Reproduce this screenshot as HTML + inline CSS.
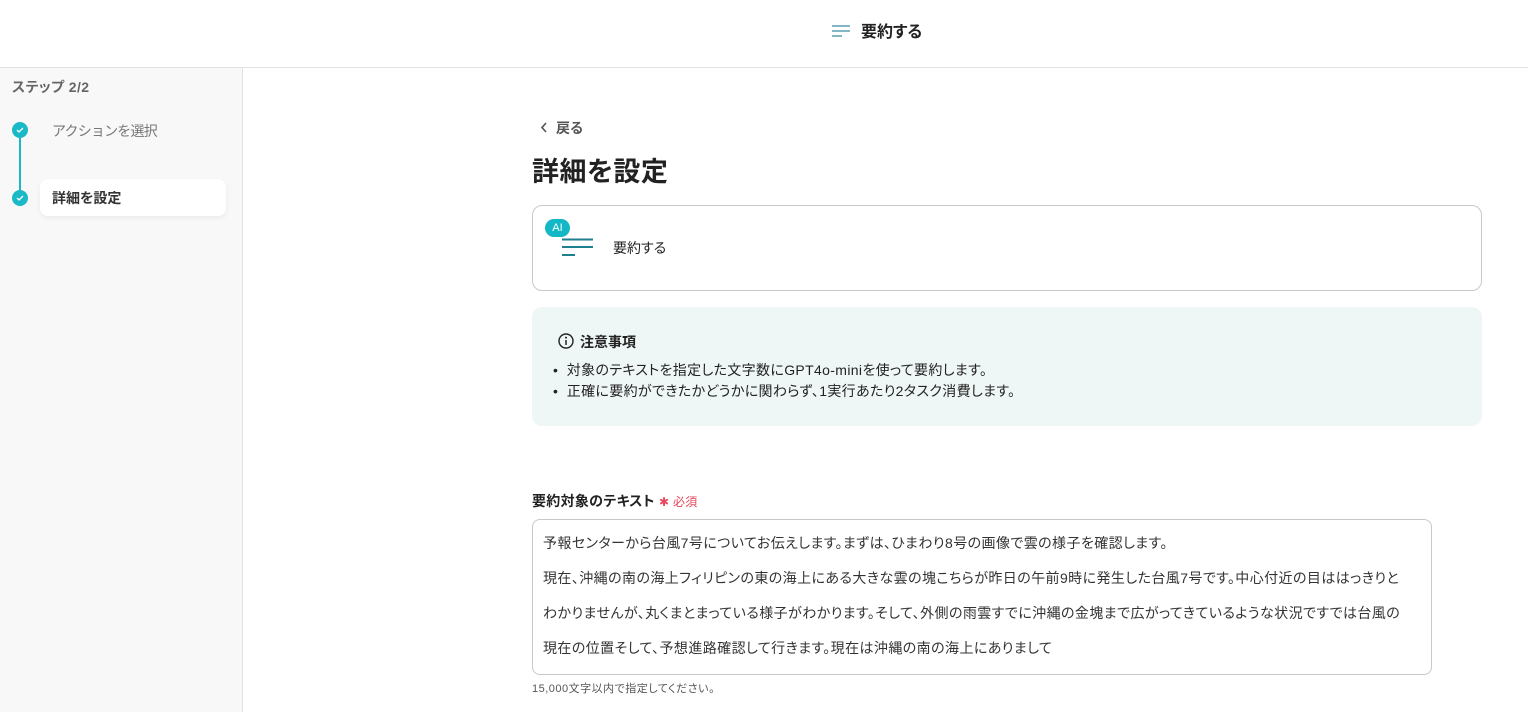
<!DOCTYPE html>
<html><head><meta charset="utf-8"><style>
*{box-sizing:border-box;margin:0;padding:0}
body{width:1528px;height:712px;overflow:hidden;background:#fff;font-family:"Liberation Sans","Noto Sans CJK JP",sans-serif;color:#333;position:relative;font-feature-settings:"palt"}
.hdr{position:absolute;left:0;top:0;width:1528px;height:68px;border-bottom:1px solid #e2e2e2;background:#fff}
.side{position:absolute;left:0;top:68px;width:243px;height:644px;background:#f8f8f8;border-right:1px solid #e2e2e2}
.abs{position:absolute}
.dot{position:absolute;width:16px;height:16px;border-radius:50%;background:#1bb8c8}
.dot svg{position:absolute;left:4px;top:4px}
p.t{font-size:14px;color:#333;position:absolute;left:543px;white-space:nowrap;letter-spacing:0.42px}
</style></head><body>
<div class="hdr">
<svg class="abs" style="left:832px;top:24px" width="20" height="14"><path d="M0 2h18M0 7h18M0 12h10" stroke="#5b9fb0" stroke-width="1.5"/></svg>
<div class="abs" style="left:861px;top:18px;font-size:16px;font-weight:bold;color:#222">要約する</div>
</div>
<div class="side">
<div class="abs" style="left:12px;top:9px;font-size:14px;font-weight:bold;color:#666;letter-spacing:0.4px">ステップ 2/2</div>
<div class="abs" style="left:19px;top:70px;width:2px;height:60px;background:#1bb8c8"></div>
<div class="dot" style="left:12px;top:54px"><svg width="8" height="8"><path d="M1 4l2 2 4-4" stroke="#fff" stroke-width="1.3" fill="none"/></svg></div>
<div class="dot" style="left:12px;top:122px"><svg width="8" height="8"><path d="M1 4l2 2 4-4" stroke="#fff" stroke-width="1.3" fill="none"/></svg></div>
<div class="abs" style="left:52px;top:53px;font-size:14px;color:#777;font-feature-settings:normal;letter-spacing:-0.8px">アクションを選択</div>
<div class="abs" style="left:40px;top:111px;width:186px;height:37px;background:#fff;border-radius:8px;box-shadow:0 2px 6px rgba(0,0,0,.06)"></div>
<div class="abs" style="left:52px;top:120px;font-size:14px;font-weight:bold;color:#333">詳細を設定</div>
</div>
<svg class="abs" style="left:540px;top:122px" width="8" height="11"><path d="M6 1L2 5.5 6 10" stroke="#555" stroke-width="1.6" fill="none"/></svg>
<div class="abs" style="left:556px;top:118px;font-size:14px;color:#555;font-weight:bold">戻る</div>
<div class="abs" style="left:532px;top:150px;font-size:27px;font-weight:bold;color:#222;letter-spacing:0.5px">詳細を設定</div>
<div class="abs" style="left:532px;top:205px;width:950px;height:86px;border:1px solid #c8c8c8;border-radius:10px"></div>
<svg class="abs" style="left:560px;top:238px" width="34" height="20"><path d="M2 1.5h31M2 9h31M2 17h13" stroke="#1e7f8f" stroke-width="2"/></svg>
<div class="abs" style="left:545px;top:219px;width:25px;height:18px;border-radius:9px;background:#13b7c6;color:#fff;font-size:11px;text-align:center;line-height:18px">AI</div>
<div class="abs" style="left:613px;top:238px;font-size:14px;color:#222">要約する</div>
<div class="abs" style="left:532px;top:307px;width:950px;height:119px;background:#eff7f6;border-radius:10px"></div>
<svg class="abs" style="left:558px;top:333px" width="16" height="16"><circle cx="8" cy="8" r="7" stroke="#222" stroke-width="1.4" fill="none"/><path d="M8 7v5" stroke="#222" stroke-width="1.5"/><circle cx="8" cy="4.6" r="1" fill="#222"/></svg>
<div class="abs" style="left:580px;top:332px;font-size:14px;font-weight:bold;color:#222">注意事項</div>
<div class="abs" style="left:553px;top:360px;font-size:14px;color:#222;line-height:21px;letter-spacing:0.35px">• &nbsp;対象のテキストを指定した文字数にGPT4o-miniを使って要約します。<br>• &nbsp;正確に要約ができたかどうかに関わらず、1実行あたり2タスク消費します。</div>
<div class="abs" style="left:532px;top:491px;font-size:14px;font-weight:bold;color:#222;letter-spacing:0.3px">要約対象のテキスト <span style="color:#e8475c;font-weight:normal;font-size:12px">✱ 必須</span></div>
<div class="abs" style="left:532px;top:519px;width:900px;height:156px;border:1px solid #c8c8c8;border-radius:8px"></div>
<p class="t" style="top:533px">予報センターから台風7号についてお伝えします。まずは、ひまわり8号の画像で雲の様子を確認します。</p>
<p class="t" style="top:568px">現在、沖縄の南の海上フィリピンの東の海上にある大きな雲の塊こちらが昨日の午前9時に発生した台風7号です。中心付近の目ははっきりと</p>
<p class="t" style="top:603px">わかりませんが、丸くまとまっている様子がわかります。そして、外側の雨雲すでに沖縄の金塊まで広がってきているような状況ですでは台風の</p>
<p class="t" style="top:638px">現在の位置そして、予想進路確認して行きます。現在は沖縄の南の海上にありまして</p>
<div class="abs" style="left:532px;top:680px;font-size:11px;color:#555;letter-spacing:0.5px">15,000文字以内で指定してください。</div>
</body></html>
